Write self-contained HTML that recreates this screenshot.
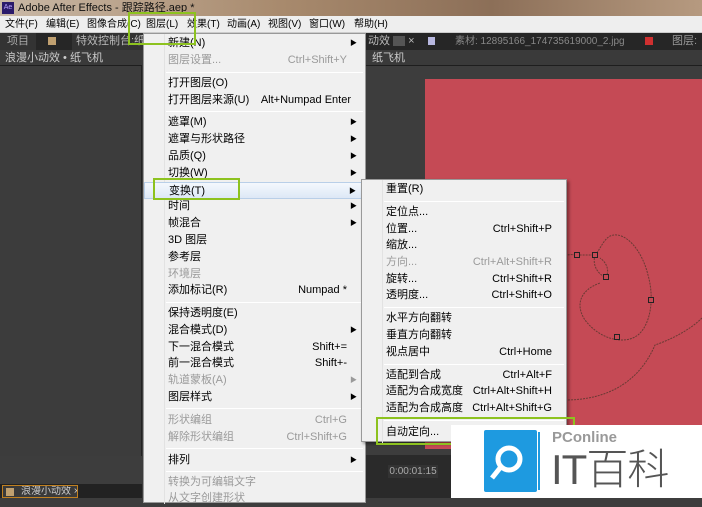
<!DOCTYPE html>
<html><head><meta charset="utf-8"><style>
*{margin:0;padding:0;box-sizing:border-box;white-space:nowrap}
body{width:702px;height:498px;overflow:hidden;position:relative;background:#3d3d3d;font-family:"Liberation Sans","Noto Sans CJK SC",sans-serif;font-size:11px}
.abs{position:absolute}
#title{left:0;top:0;width:702px;height:16px;background:linear-gradient(90deg,#c9b8a6,#a88a6d 40%,#8c6f58 70%,#b69a80);color:#111;font-size:11px;line-height:16px;padding-left:18px}
#menubar{left:0;top:16px;width:702px;height:17px;background:#eeeeee;border-bottom:1px solid #ccc;color:#000;line-height:17px;font-size:10px}
#menubar span{position:absolute;top:0}
.tabbar{top:33px;height:17px;background:#262626;color:#aaa;line-height:17px}
.sub{top:50px;height:16px;background:#3a3a3a;border-bottom:1px solid #1e1e1e;color:#ccc;line-height:16px;padding-left:5px}
.menu{background:#f0f0f0;border:1px solid #999;color:#000}
.it{position:absolute;left:0;right:0;height:17px;line-height:17px;padding-left:24px}
.it.dis{color:#9a9a9a}
.it .k{position:absolute;right:18px;top:0}
.it .a{position:absolute;right:8px;top:0;font-size:7px}
.sep{position:absolute;left:22px;right:2px;height:1px;background:#d7d7d7;border-bottom:1px solid #fff}
.green{border:2px solid #8dc21f}
</style></head><body>
<div id="title" class="abs"><div class="abs" style="left:2px;top:2px;width:12px;height:12px;background:#2a1a6a;color:#b9a3ff;font-size:7px;line-height:12px;text-align:center">Ae</div>Adobe After Effects - 跟踪路径.aep *</div>
<div id="menubar" class="abs">
<span style="left:5px">文件(F)</span><span style="left:46px">编辑(E)</span><span style="left:87px">图像合成(C)</span><span style="left:146px">图层(L)</span><span style="left:187px">效果(T)</span><span style="left:227px">动画(A)</span><span style="left:268px">视图(V)</span><span style="left:309px">窗口(W)</span><span style="left:354px">帮助(H)</span>
</div>
<div class="abs tabbar" style="left:0;width:702px"></div>
<div class="abs" style="left:0;top:33px;width:36px;height:17px;background:#333;color:#aaa;line-height:17px;text-align:center">项目</div>
<div class="abs" style="left:48px;top:37px;width:8px;height:8px;background:#c0a070"></div>
<div class="abs" style="left:72px;top:33px;color:#bbb;line-height:17px;background:#333;width:72px;padding-left:4px;overflow:hidden">特效控制台:纸</div>
<div class="abs" style="left:368px;top:33px;color:#bbb;line-height:17px">动效 <span style="display:inline-block;width:12px;height:10px;background:#555;vertical-align:middle"></span> ×</div>
<div class="abs" style="left:428px;top:37px;width:7px;height:8px;background:#b8b8e0"></div>
<div class="abs" style="left:455px;top:33px;color:#888;line-height:17px;font-size:10px">素材: 12895166_174735619000_2.jpg</div>
<div class="abs" style="left:645px;top:37px;width:8px;height:8px;background:#d03030"></div>
<div class="abs" style="left:672px;top:33px;color:#999;line-height:17px">图层:</div>
<div class="abs sub" style="left:0;width:142px">浪漫小动效 • 纸飞机</div>
<div class="abs sub" style="left:366px;width:336px;padding-left:6px">纸飞机</div>
<div class="abs" style="left:0;top:66px;width:142px;height:390px;background:#3c3c3c;border-right:1px solid #222"></div>
<div class="abs" style="left:0;top:484px;width:142px;height:14px;background:#222"></div>
<div class="abs" style="left:2px;top:485px;width:76px;height:13px;border:1px solid #c08020;background:#3a3a3a;color:#ccc;line-height:12px;padding-left:18px;font-size:10px;overflow:hidden">浪漫小动效 ×</div>
<div class="abs" style="left:6px;top:488px;width:8px;height:8px;background:#c0a070"></div>
<div class="abs" style="left:425px;top:79px;width:277px;height:370px;background:#c54a55"></div>
<svg class="abs" style="left:0;top:0" width="702" height="498" fill="none" stroke="#6a3a34" stroke-width="1" stroke-dasharray="2 1">
<path d="M545,262 C555,255 570,254 577,255 L595,255 C600,250 603,240 610,236 C625,230 642,250 648,275 C655,300 650,325 638,335 C625,345 600,340 585,320 C575,305 580,290 600,283"/>
<path d="M595,255 C592,265 598,275 606,277 C610,270 606,262 600,258"/>
<path d="M702,318 C690,330 670,340 655,345 C640,380 610,400 565,400"/>
<g fill="#c54a55" stroke="#222" stroke-dasharray="none"><rect x="574.5" y="252.5" width="5" height="5"/><rect x="592.5" y="252.5" width="5" height="5"/><rect x="603.5" y="274.5" width="5" height="5"/><rect x="648.5" y="297.5" width="5" height="5"/><rect x="614.5" y="334.5" width="5" height="5"/></g>
</svg>
<div class="abs" style="left:366px;top:455px;width:86px;height:43px;background:#2a2a2a"></div>
<div class="abs" style="left:388px;top:465px;width:50px;height:13px;background:#333;color:#aaa;font-size:10px;line-height:13px;text-align:center">0:00:01:15</div>

<div class="abs menu" style="left:143px;top:33px;width:223px;height:470px">
<div class="abs" style="left:20px;top:0;width:1px;height:470px;background:#e2e2e2"></div>
<div class="it" style="top:1px">新建(N)<span class="a">▶</span></div>
<div class="it dis" style="top:18px">图层设置...<span class="k">Ctrl+Shift+Y</span></div>
<div class="sep" style="top:38px"></div>
<div class="it" style="top:41px">打开图层(O)</div>
<div class="it" style="top:58px">打开图层来源(U)<span class="k" style="right:14px">Alt+Numpad Enter</span></div>
<div class="sep" style="top:77px"></div>
<div class="it" style="top:80px">遮罩(M)<span class="a">▶</span></div>
<div class="it" style="top:97px">遮罩与形状路径<span class="a">▶</span></div>
<div class="it" style="top:114px">品质(Q)<span class="a">▶</span></div>
<div class="it" style="top:131px">切换(W)<span class="a">▶</span></div>
<div class="it" style="top:148px;background:linear-gradient(#f4f8fd,#dde8f6);border:1px solid #b9cfe8">变换(T)<span class="a">▶</span></div>
<div class="it" style="top:164px">时间<span class="a">▶</span></div>
<div class="it" style="top:181px">帧混合<span class="a">▶</span></div>
<div class="it" style="top:198px">3D 图层</div>
<div class="it" style="top:215px">参考层</div>
<div class="it dis" style="top:232px">环境层</div>
<div class="it" style="top:248px">添加标记(R)<span class="k">Numpad *</span></div>
<div class="sep" style="top:268px"></div>
<div class="it" style="top:271px">保持透明度(E)</div>
<div class="it" style="top:288px">混合模式(D)<span class="a">▶</span></div>
<div class="it" style="top:305px">下一混合模式<span class="k">Shift+=</span></div>
<div class="it" style="top:321px">前一混合模式<span class="k">Shift+-</span></div>
<div class="it dis" style="top:338px">轨道蒙板(A)<span class="a">▶</span></div>
<div class="it" style="top:355px">图层样式<span class="a">▶</span></div>
<div class="sep" style="top:374px"></div>
<div class="it dis" style="top:378px">形状编组<span class="k">Ctrl+G</span></div>
<div class="it dis" style="top:395px">解除形状编组<span class="k">Ctrl+Shift+G</span></div>
<div class="sep" style="top:414px"></div>
<div class="it" style="top:418px">排列<span class="a">▶</span></div>
<div class="sep" style="top:437px"></div>
<div class="it dis" style="top:440px">转换为可编辑文字</div>
<div class="it dis" style="top:456px">从文字创建形状</div>
</div>

<div class="abs menu" style="left:361px;top:179px;width:206px;height:263px;box-shadow:2px 2px 3px rgba(0,0,0,.4)">
<div class="abs" style="left:20px;top:0;width:1px;height:263px;background:#e2e2e2"></div>
<div class="it" style="top:1px">重置(R)</div>
<div class="sep" style="top:21px"></div>
<div class="it" style="top:24px">定位点...</div>
<div class="it" style="top:41px">位置...<span class="k" style="right:14px">Ctrl+Shift+P</span></div>
<div class="it" style="top:57px">缩放...</div>
<div class="it dis" style="top:74px">方向...<span class="k" style="right:14px">Ctrl+Alt+Shift+R</span></div>
<div class="it" style="top:91px">旋转...<span class="k" style="right:14px">Ctrl+Shift+R</span></div>
<div class="it" style="top:107px">透明度...<span class="k" style="right:14px">Ctrl+Shift+O</span></div>
<div class="sep" style="top:127px"></div>
<div class="it" style="top:130px">水平方向翻转</div>
<div class="it" style="top:147px">垂直方向翻转</div>
<div class="it" style="top:164px">视点居中<span class="k" style="right:14px">Ctrl+Home</span></div>
<div class="sep" style="top:184px"></div>
<div class="it" style="top:187px">适配到合成<span class="k" style="right:14px">Ctrl+Alt+F</span></div>
<div class="it" style="top:203px">适配为合成宽度<span class="k" style="right:14px">Ctrl+Alt+Shift+H</span></div>
<div class="it" style="top:220px">适配为合成高度<span class="k" style="right:14px">Ctrl+Alt+Shift+G</span></div>
<div class="sep" style="top:240px"></div>
<div class="it" style="top:244px">自动定向...</div>
</div>

<div class="abs green" style="left:128px;top:12px;width:68px;height:33px"></div>
<div class="abs green" style="left:153px;top:178px;width:87px;height:22px"></div>
<div class="abs green" style="left:376px;top:417px;width:199px;height:28px"></div>

<div class="abs" style="left:451px;top:425px;width:251px;height:73px;background:#fff"></div>
<div class="abs" style="left:484px;top:430px;width:53px;height:62px;background:#1e9ae0;border-radius:2px"></div>
<svg class="abs" style="left:484px;top:430px" width="60" height="62"><circle cx="25" cy="29" r="11" fill="none" stroke="#fff" stroke-width="5"/><path d="M16 38 L8 48" stroke="#fff" stroke-width="5"/><path d="M55 2 V60" stroke="#1e9ae0" stroke-width="2"/></svg>
<div class="abs" style="left:552px;top:429px;color:#999;font-size:15px;line-height:18px;font-weight:bold;font-family:'Liberation Sans',sans-serif">PConline</div>
<div class="abs" style="left:551px;top:446px;color:#555;font-size:42px;line-height:48px;letter-spacing:-1px;font-weight:300">IT百科</div>
</body></html>
